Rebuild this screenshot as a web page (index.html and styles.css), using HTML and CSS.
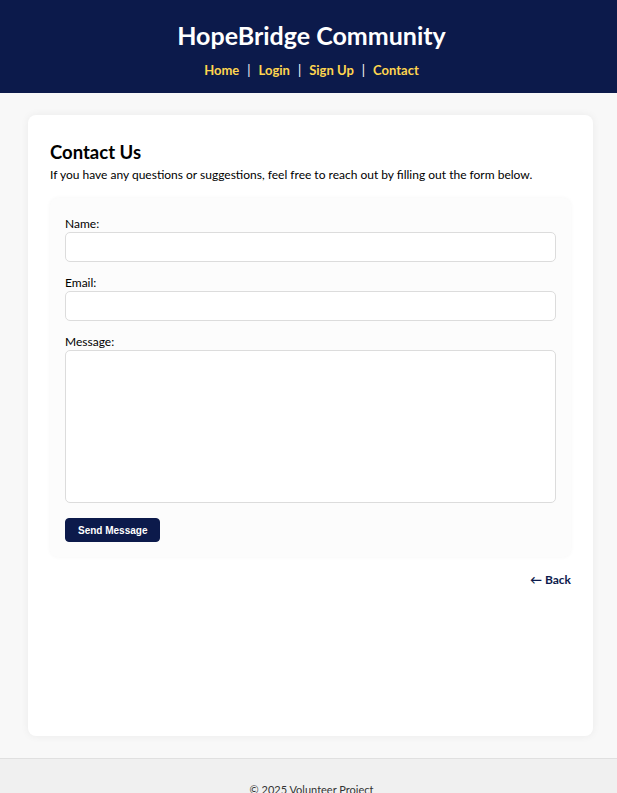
FILE: index.html
```html
<!DOCTYPE html>
<html lang="en">
<head>
<meta charset="utf-8">
<title>Contact - HopeBridge Community</title>
<link rel="stylesheet" href="styles.css">
</head>
<body>
<header class="site-header">
  <h1 class="site-title">HopeBridge Community</h1>
  <nav class="site-nav">
    <a href="#">Home</a><span class="sep">|</span><a href="#">Login</a><span class="sep">|</span><a href="#">Sign Up</a><span class="sep">|</span><a href="#">Contact</a>
  </nav>
</header>
<main class="main">
  <section class="card">
    <h2 class="card-title">Contact Us</h2>
    <p class="intro">If you have any questions or suggestions, feel free to reach out by filling out the form below.</p>
    <form class="form">
      <label class="label" for="name">Name:</label>
      <input class="field" id="name" type="text">
      <label class="label" for="email">Email:</label>
      <input class="field" id="email" type="email">
      <label class="label" for="msg">Message:</label>
      <textarea class="field area" id="msg"></textarea>
      <button class="btn" type="button">Send Message</button>
    </form>
    <div class="back-row"><a class="back" href="#">← Back</a></div>
  </section>
</main>
<footer class="site-footer">© 2025 Volunteer Project</footer>
</body>
</html>
```
FILE: styles.css
```css
* { box-sizing: border-box; }
html, body { margin: 0; padding: 0; }
body {
  font-family: Lato, "Open Sans", sans-serif;
  background: #f8f8f8;
  color: #000;
}
.site-header {
  background: #0c1a4b;
  height: 93px;
  padding: 19px 0 0 6px;
  text-align: center;
}
.site-title {
  margin: 0;
  color: #fff;
  font-size: 25px;
  font-weight: 700;
  line-height: 32px;
}
.site-nav {
  margin-top: 11px;
  font-size: 13px;
  font-weight: 700;
  line-height: 16px;
}
.site-nav a { color: #ffd54f; text-decoration: none; }
.site-nav .sep { color: #fff; margin: 0 8px; font-weight: 400; }
.main { padding: 22px 24px 22px 28px; }
.card {
  background: #fff;
  border-radius: 8px;
  box-shadow: 0 0 8px rgba(0,0,0,0.06);
  min-height: 621px;
  padding: 26px 22px 20px 22px;
}
.card-title {
  margin: 0;
  font-size: 18.5px;
  line-height: 22px;
  font-weight: 700;
}
.intro {
  margin: 3px 0 14px;
  font-size: 12px;
  line-height: 18px;
}
.form {
  display: flex;
  flex-direction: column;
  background: #fcfcfc;
  border-radius: 8px;
  box-shadow: 0 0 4px rgba(0,0,0,0.04);
  padding: 18px 15px 15px;
}
.label { font-size: 12px; line-height: 16px; }
.field {
  display: block;
  width: 100%;
  height: 30px;
  border: 1px solid #dcdcdc;
  border-radius: 5px;
  background: #fff;
  margin-bottom: 13px;
  font: inherit;
}
.area { height: 153px; resize: none; margin-bottom: 15px; }
.btn {
  align-self: flex-start;
  background: #0c1a4b;
  color: #fff;
  border: 1px solid #0c1a4b;
  border-radius: 4px;
  font-family: "Liberation Sans", Arial, sans-serif;
  font-weight: 700;
  font-size: 10px;
  height: 24px;
  padding: 0 12px;
}
.back-row { display: flex; justify-content: flex-end; margin-top: 15px; }
.back {
  color: #0c1a4b;
  font-weight: 700;
  font-size: 12px;
  text-decoration: none;
}
.site-footer {
  border-top: 1px solid #e0e0e0;
  background: #f0f0f0;
  text-align: center;
  color: #333;
  font-size: 11px;
  padding: 24px 0 0 6px;
  height: 60px;
}
```
